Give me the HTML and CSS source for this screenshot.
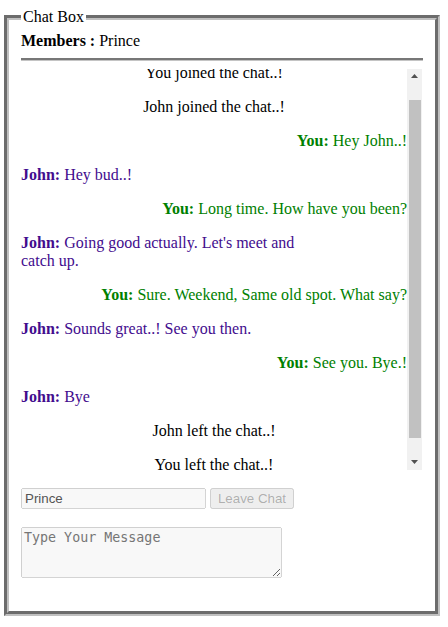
FILE: index.html
```html
<!DOCTYPE html>
<html lang="en">
<head>
<meta charset="utf-8">
<title>Chat Box</title>
<link rel="stylesheet" href="styles.css">
</head>
<body>
<fieldset class="chat-box">
  <legend class="chat-title">Chat Box</legend>
  <div class="members"><b>Members :</b> Prince</div>
  <hr class="divider">
  <div class="chat-pane">
    <div class="messages" id="messages">
      <p class="msg system">You joined the chat..!</p>
      <p class="msg system">John joined the chat..!</p>
      <p class="msg mine"><b>You:</b> Hey John..!</p>
      <p class="msg theirs"><b>John:</b> Hey bud..!</p>
      <p class="msg mine"><b>You:</b> Long time. How have you been?</p>
      <p class="msg theirs"><b>John:</b> Going good actually. Let's meet and catch up.</p>
      <p class="msg mine"><b>You:</b> Sure. Weekend, Same old spot. What say?</p>
      <p class="msg theirs"><b>John:</b> Sounds great..! See you then.</p>
      <p class="msg mine"><b>You:</b> See you. Bye.!</p>
      <p class="msg theirs"><b>John:</b> Bye</p>
      <p class="msg system">John left the chat..!</p>
      <p class="msg system">You left the chat..!</p>
    </div>
    <div class="scrollbar" aria-hidden="true">
      <div class="sb-btn">
        <svg width="7" height="4" viewBox="0 0 7 4"><polygon points="0,4 7,4 3.5,0" fill="#505050"/></svg>
      </div>
      <div class="sb-track"><div class="sb-thumb"></div></div>
      <div class="sb-btn">
        <svg width="7" height="4" viewBox="0 0 7 4"><polygon points="0,0 7,0 3.5,4" fill="#505050"/></svg>
      </div>
    </div>
  </div>
  <div class="controls">
    <input class="name-input" type="text" value="Prince" disabled>
    <button class="leave-btn" type="button" disabled>Leave Chat</button>
  </div>
  <textarea class="compose" placeholder="Type Your Message" disabled></textarea>
</fieldset>
<script src="script.js"></script>
</body>
</html>
```

FILE: styles.css
```css
html, body {
  background: #ffffff;
}

body {
  margin: 8px 0 0 0;
  font-family: "Liberation Serif", "Times New Roman", serif;
  font-size: 16px;
  color: #000;
}

.chat-box {
  box-sizing: border-box;
  width: 436px;
  margin: 0 8px 0 4px;
  padding: 5.6px 12px 33px 12px;
  border: 5px groove silver;
  min-width: 0;
}

.chat-title {
  padding: 0 2px;
  font-size: 16px;
  line-height: 18px;
}

.members {
  line-height: 18px;
}

.divider {
  height: 0;
  margin: 8px 0;
  border: 0;
  border-top: 2px solid #777777;
  border-bottom: 1px solid #c4c4c4;
}

.chat-pane {
  display: flex;
  width: 401px;
  height: 401px;
}

.messages {
  flex: 1;
  min-width: 0;
  overflow: hidden;
}

.scrollbar {
  width: 15px;
  display: flex;
  flex-direction: column;
  background: #f1f1f1;
}

.sb-btn {
  height: 15px;
  display: flex;
  align-items: center;
  justify-content: center;
}

.sb-btn svg {
  display: block;
}

.sb-track {
  flex: 1;
  display: flex;
  flex-direction: column;
  padding: 16px 1px 17px 2px;
}

.sb-thumb {
  flex: 1;
  background: #c1c1c1;
}

.msg {
  margin: 16px 0;
  line-height: 18px;
}

.system {
  text-align: center;
}

.mine {
  text-align: right;
  color: #008000;
}

.theirs {
  text-align: left;
  color: #420c8e;
  max-width: 300px;
}

.controls {
  display: flex;
  gap: 4px;
  margin-top: 18px;
}

.name-input {
  box-sizing: border-box;
  width: 185px;
  height: 21px;
  font-family: "Liberation Sans", Arial, sans-serif;
  font-size: 13.33px;
  padding: 1px 2px;
}

.leave-btn {
  box-sizing: border-box;
  width: 84px;
  height: 21px;
  font-family: "Liberation Sans", Arial, sans-serif;
  font-size: 13.33px;
  padding: 1px 0;
  white-space: nowrap;
}

.compose {
  display: block;
  box-sizing: border-box;
  width: 261px;
  height: 51px;
  margin-top: 18px;
  font-family: "DejaVu Sans Mono", monospace;
  font-size: 13.33px;
  padding: 2px;
}
```

FILE: script.js
```js
document.getElementById('messages').scrollTop = 21;
```
